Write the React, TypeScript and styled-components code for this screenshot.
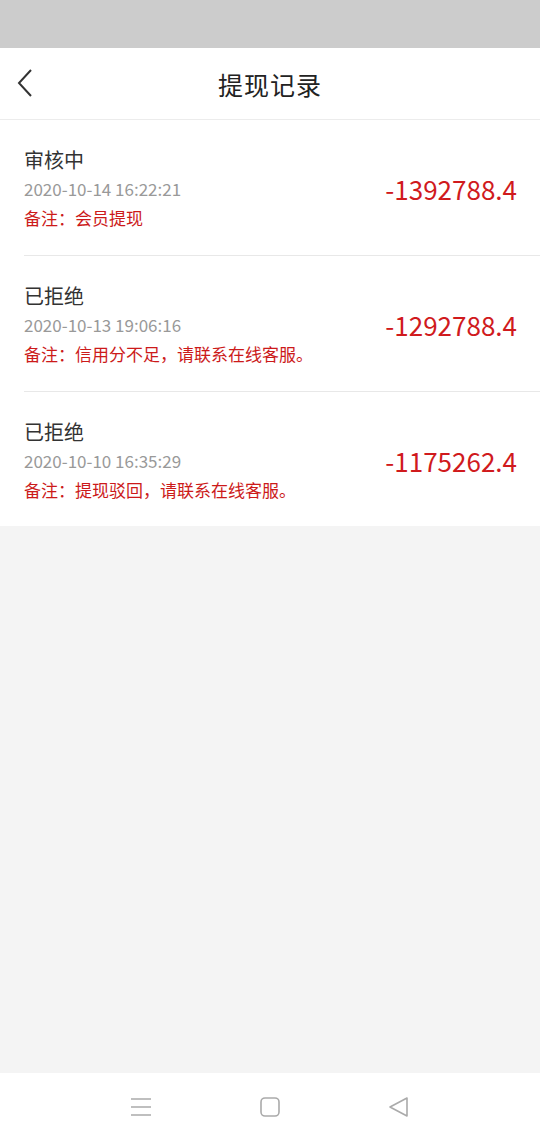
import React from 'react';
import styled, { createGlobalStyle } from 'styled-components';

const GlobalStyle = createGlobalStyle`
  html, body {
    margin: 0;
    padding: 0;
    background: #f4f4f4;
    font-family: "Noto Sans CJK SC", "Noto Sans", sans-serif;
  }
`;

const Page = styled.div`
  width: 540px;
  height: 1140px;
  display: flex;
  flex-direction: column;
  background: #f4f4f4;
`;

const StatusBar = styled.div`
  height: 48px;
  background: #cccccc;
`;

const Header = styled.div`
  position: relative;
  height: 71px;
  background: #fff;
  border-bottom: 1px solid #ececec;
  display: flex;
  align-items: center;
  justify-content: center;
`;

const BackButton = styled.div`
  position: absolute;
  left: 14px;
  top: 20px;
  width: 22px;
  height: 30px;
  display: flex;
  align-items: center;
  justify-content: center;
`;

const Title = styled.h1`
  margin: 0;
  font-size: 25px;
  font-weight: 400;
  color: #222;
  letter-spacing: 1px;
`;

const List = styled.div`
  background: #fff;
`;

const Item = styled.div<{ $last?: boolean }>`
  margin-left: 24px;
  padding: 26px 23px 23px 0;
  display: flex;
  align-items: center;
  justify-content: space-between;
  border-bottom: ${(p) => (p.$last ? 'none' : '1px solid #e8e8e8')};
  &:last-child {
    padding-bottom: 22px;
  }
`;

const Info = styled.div`
  display: flex;
  flex-direction: column;
`;

const Status = styled.div`
  font-size: 20px;
  line-height: 28px;
  color: #333;
`;

const Time = styled.div`
  font-size: 17px;
  line-height: 30px;
  color: #999;
`;

const Remark = styled.div`
  font-size: 17px;
  line-height: 28px;
  color: #cc1a1a;
`;

const Amount = styled.div`
  font-size: 26px;
  color: #d01a1d;
  margin-top: -2px;
`;

const Spacer = styled.div`
  flex: 1;
`;

const NavBar = styled.div`
  height: 67px;
  background: #fff;
  display: flex;
  align-items: center;
  justify-content: space-between;
  padding: 0 130px 0 130px;
`;

const records = [
  { status: '审核中', time: '2020-10-14 16:22:21', remark: '备注：会员提现', amount: '-1392788.4' },
  { status: '已拒绝', time: '2020-10-13 19:06:16', remark: '备注：信用分不足，请联系在线客服。', amount: '-1292788.4' },
  { status: '已拒绝', time: '2020-10-10 16:35:29', remark: '备注：提现驳回，请联系在线客服。', amount: '-1175262.4' },
];

export default function App() {
  return (
    <Page>
      <GlobalStyle />
      <StatusBar />
      <Header>
        <BackButton>
          <svg width="16" height="28" viewBox="0 0 16 28">
            <path d="M14 1 L2 14 L14 27" fill="none" stroke="#333" strokeWidth="2" />
          </svg>
        </BackButton>
        <Title>提现记录</Title>
      </Header>
      <List>
        {records.map((r, i) => (
          <Item key={i} $last={i === records.length - 1}>
            <Info>
              <Status>{r.status}</Status>
              <Time>{r.time}</Time>
              <Remark>{r.remark}</Remark>
            </Info>
            <Amount>{r.amount}</Amount>
          </Item>
        ))}
      </List>
      <Spacer />
      <NavBar>
        <svg width="22" height="20" viewBox="0 0 22 20">
          <path d="M1 2 H21 M1 10 H21 M1 18 H21" stroke="#aaa" strokeWidth="1.5" />
        </svg>
        <svg width="20" height="20" viewBox="0 0 20 20">
          <rect x="1" y="1" width="18" height="18" rx="4" fill="none" stroke="#aaa" strokeWidth="1.6" />
        </svg>
        <svg width="22" height="22" viewBox="0 0 22 22">
          <path d="M19 2 L2 11 L19 20 Z" fill="none" stroke="#aaa" strokeWidth="1.6" strokeLinejoin="round" />
        </svg>
      </NavBar>
    </Page>
  );
}
